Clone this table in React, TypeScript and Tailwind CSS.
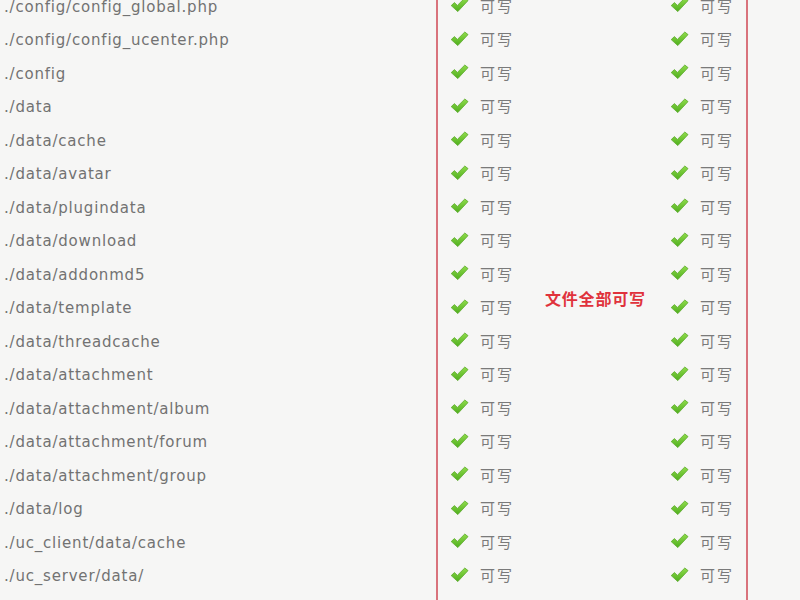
import React from "react";

const paths = [
  "./config/config_global.php",
  "./config/config_ucenter.php",
  "./config",
  "./data",
  "./data/cache",
  "./data/avatar",
  "./data/plugindata",
  "./data/download",
  "./data/addonmd5",
  "./data/template",
  "./data/threadcache",
  "./data/attachment",
  "./data/attachment/album",
  "./data/attachment/forum",
  "./data/attachment/group",
  "./data/log",
  "./uc_client/data/cache",
  "./uc_server/data/",
  "./uc_server/data/cache",
];

const Check = () => (
  <svg width="19" height="16" viewBox="0 0 19 16" className="shrink-0 -mt-[3px]">
    <defs>
      <linearGradient id="ck" x1="0" y1="0" x2="0" y2="1">
        <stop offset="0" stopColor="#8fdc4a" />
        <stop offset="1" stopColor="#4fae1e" />
      </linearGradient>
    </defs>
    <path
      d="M1.2 8.6 L4.4 5.6 L7.4 8.4 L14.8 1 L18 3.6 L7.8 14.6 Z"
      fill="url(#ck)"
      stroke="#5aa82a"
      strokeWidth="0.8"
      strokeLinejoin="round"
    />
  </svg>
);

const Status = () => (
  <div className="flex h-[33.5px] items-center gap-[11px]">
    <Check />
    <span className="text-[15px] text-[#7a7a7a] tracking-[2px]">可写</span>
  </div>
);

export default function App() {
  return (
    <div
      className="h-[600px] w-[800px] overflow-hidden bg-[#f6f6f5]"
      style={{ fontFamily: '"DejaVu Sans", "Noto Sans CJK SC", sans-serif' }}
    >
      <div className="-mt-[10px] flex">
        <div className="w-[436px] pl-[4px]">
          {paths.map((p) => (
            <div
              key={p}
              className="flex h-[33.5px] items-center text-[15px] tracking-[0.8px] text-[#727272]"
            >
              {p}
            </div>
          ))}
        </div>
        <div className="grid w-[312px] grid-cols-[107px_125px_1fr] border-x-2 border-[#d9737c]">
          <div className="pl-[12px]">
            {paths.map((p) => (
              <Status key={p} />
            ))}
          </div>
          <div className="pt-[296px]">
            <span
              className="text-[16px] font-bold text-[#e0323c] tracking-[0.8px]"
              style={{ fontFamily: '"Noto Sans CJK SC", sans-serif' }}
            >
              文件全部可写
            </span>
          </div>
          <div>
            {paths.map((p) => (
              <Status key={p} />
            ))}
          </div>
        </div>
      </div>
    </div>
  );
}
